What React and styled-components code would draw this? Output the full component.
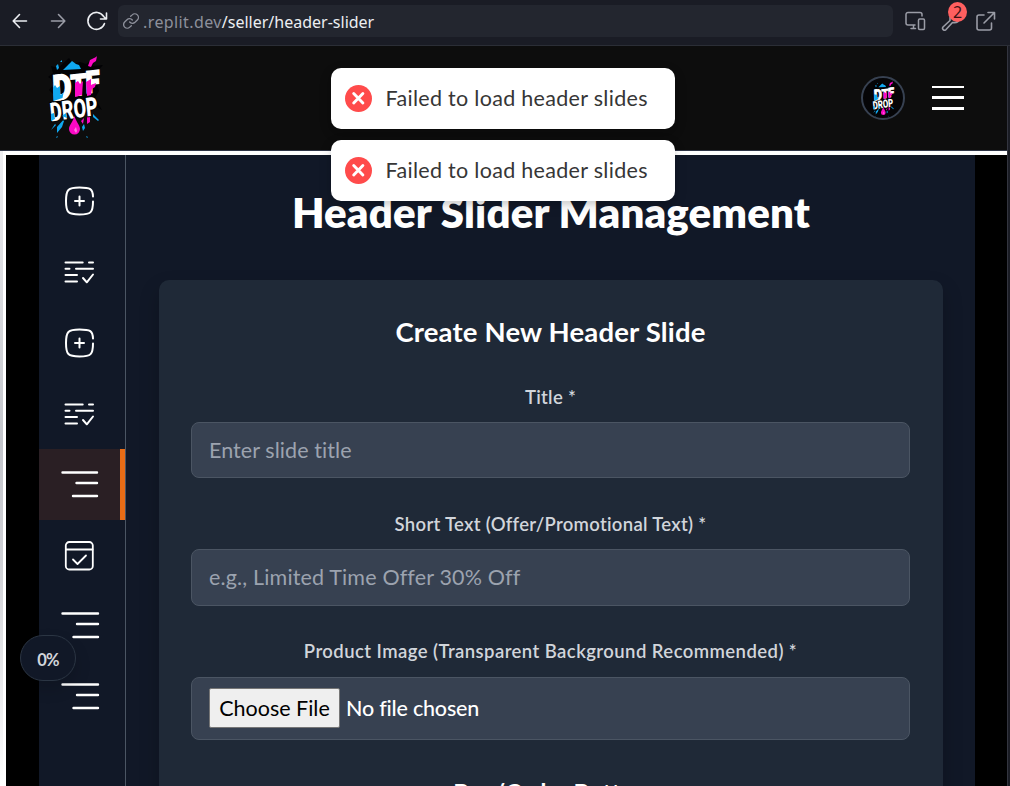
import React from "react";
import styled, { createGlobalStyle, css } from "styled-components";

const Global = createGlobalStyle`
  * { box-sizing: border-box; }
  html, body { margin: 0; padding: 0; height: 100%; overflow: hidden; background: #1c1f27; }
  body { font-family: Lato, "Open Sans", sans-serif; font-variant-ligatures: none; }
  h1, h2, h3, p { margin: 0; }
`;

const Frame = styled.div`
  position: relative;
  width: 1010px;
  height: 786px;
  overflow: hidden;
  display: flex;
  flex-direction: column;
  background: #1a1c24;
`;

const Toolbar = styled.header`
  display: flex;
  align-items: center;
  height: 46px;
  padding: 0 13px 4px 10px;
  background: #1a1c25;
  border-bottom: 1px solid #2b2e36;
  color: #9a9ca6;
  svg { display: block; flex: none; }
`;

const NavIcons = styled.div`
  display: flex;
  align-items: center;
  width: 108px;
  gap: 18px;
`;

const AddressBar = styled.div`
  flex: none;
  display: flex;
  align-items: center;
  width: 775px;
  height: 32px;
  margin-top: 1px;
  padding-left: 5px;
  border-radius: 6px;
  background: #23262f;
  font: 400 16px/20px "Noto Sans", sans-serif;
  color: #8d909b;
  white-space: pre;
`;

const Host = styled.span`
  margin-left: 4px;
  padding-top: 2px;
  letter-spacing: 0.4px;
`;

const Path = styled.span`
  padding-top: 2px;
  color: #eceef2;
`;

const Tools = styled.div`
  display: flex;
  align-items: center;
  gap: 15px;
  margin-left: 12px;
`;

const Tool = styled.div`
  position: relative;
`;

const Count = styled.span`
  position: absolute;
  left: 7px;
  top: -9px;
  width: 19px;
  height: 20px;
  border-radius: 50%;
  background: #ff5f5f;
  color: #3b1216;
  font: 400 16px/20px "Noto Sans", sans-serif;
  text-align: center;
`;

const Viewport = styled.div`
  flex: 1;
  min-height: 0;
  display: flex;
  flex-direction: column;
  width: 1008px;
  border-right: 1px solid #33353f;
`;

const SiteHeader = styled.div`
  flex: none;
  display: flex;
  align-items: center;
  height: 105px;
  padding: 0 43px 0 35px;
  background: #0d0d0d;
  border-bottom: 1px solid #2f3546;
`;

const Brand = styled.div`
  align-self: flex-start;
  svg { display: block; }
`;

const Avatar = styled.div`
  display: flex;
  align-items: center;
  justify-content: center;
  width: 44px;
  height: 44px;
  margin-left: auto;
  margin-right: 27px;
  border: 2px solid #374151;
  border-radius: 50%;
  background: #050507;
`;

const MenuButton = styled.div`
  display: flex;
  flex-direction: column;
  justify-content: space-between;
  width: 32px;
  height: 24px;
`;

const MenuBar = styled.span`
  height: ${(p) => (p.$thin ? "2px" : "3px")};
  background: #fff;
`;

const Body = styled.div`
  flex: 1;
  min-height: 0;
  display: flex;
  padding-top: 4px;
  background: #fff;
`;

const Track = styled.div`
  flex: none;
  width: 6px;
  margin-top: -4px;
  background: linear-gradient(#eeeef1, #c4c6cc 46%, #d0d1d6 65%, #fff 100%);
  border-right: 3px solid #fff;
`;

const Stage = styled.div`
  flex: 1;
  display: flex;
  padding: 0 32px 0 33px;
  background: #000;
`;

const Sidebar = styled.nav`
  flex: none;
  width: 87px;
  padding-top: 11px;
  background: #111827;
  border-right: 1px solid #4b5563;
`;

const SideItem = styled.div`
  display: flex;
  align-items: center;
  justify-content: center;
  height: 70.8px;
  width: 86px;
  padding-left: ${(p) => (p.$wide ? "1px" : 0)};
  border-right: 5px solid transparent;
  svg { display: block; overflow: visible; }
  ${(p) => p.$active && css`
    background: #2a1f24;
    border-right-color: #e76c16;
  `}
`;

const Main = styled.main`
  flex: 1;
  min-width: 0;
  padding: 32px 32px 0 33px;
  background: #111827;
  text-align: center;
`;

const PageTitle = styled.h1`
  height: 50px;
  font-size: 42px;
  line-height: 50px;
  font-weight: 800;
  letter-spacing: 0.13px;
  color: #fff;
  white-space: nowrap;
`;

const Card = styled.section`
  height: 600px;
  margin-top: 43px;
  padding: 31px 33px 0 32px;
  border-radius: 10px;
  background: #1f2937;
  box-shadow: 0 10px 20px rgba(0, 0, 0, 0.22);
`;

const CardTitle = styled.h2`
  height: 42px;
  font-size: 27.5px;
  line-height: 42px;
  font-weight: 700;
  letter-spacing: 0.16px;
  color: #fff;
  white-space: nowrap;
`;

const Label = styled.label`
  display: block;
  height: 24px;
  margin-top: ${(p) => p.$gap}px;
  font-size: 18.5px;
  line-height: 24px;
  font-weight: 600;
  letter-spacing: ${(p) => p.$spacing}px;
  color: #d1d5db;
  white-space: nowrap;
`;

const Field = styled.div`
  display: flex;
  align-items: center;
  height: ${(p) => p.$height}px;
  margin-top: ${(p) => p.$gap || 13}px;
  padding: 0 17px ${(p) => p.$lift || 0}px;
  border: 1px solid #4b5563;
  border-radius: 8px;
  background: #374151;
  color: #9ca3af;
  font-size: 21.5px;
  line-height: 28px;
  letter-spacing: ${(p) => p.$spacing || 0}px;
  white-space: nowrap;
`;

const FileButton = styled.span`
  display: flex;
  align-items: center;
  justify-content: center;
  width: 131px;
  height: 40px;
  margin-right: 6px;
  border: 1px solid #767676;
  border-radius: 2px;
  background: #efefef;
  color: #000;
`;

const FileName = styled.span`
  color: #fff;
  font-weight: 500;
  letter-spacing: -0.2px;
`;

const SectionTitle = styled.h3`
  margin-top: 37px;
  font-size: 24px;
  line-height: 32px;
  font-weight: 700;
  color: #fff;
`;

const Toasts = styled.div`
  position: absolute;
  left: 331px;
  top: 68px;
  display: flex;
  flex-direction: column;
  gap: 11px;
`;

const Toast = styled.div`
  display: flex;
  align-items: center;
  width: 344px;
  height: 61px;
  padding-left: 14px;
  border-radius: 10px;
  background: #fff;
  box-shadow: 0 4px 13px rgba(0, 0, 0, 0.13), 0 4px 4px rgba(0, 0, 0, 0.08);
  svg { display: block; margin-right: 13.5px; }
`;

const ToastText = styled.span`
  padding-bottom: 1px;
  font-size: 21.5px;
  line-height: 28px;
  letter-spacing: 0.3px;
  color: #363636;
  white-space: nowrap;
`;

const Progress = styled.div`
  position: absolute;
  left: 20px;
  top: 635px;
  width: 56px;
  height: 46px;
  border: 1px solid #2b3543;
  border-radius: 23px;
  background: #111827;
  box-shadow: 0 8px 16px rgba(0, 0, 0, 0.15);
  color: #d1d5db;
  font-size: 16.5px;
  line-height: 49px;
  font-weight: 700;
  letter-spacing: -0.8px;
  text-align: center;
`;

const Logo = ({ width, height }) => (
  <svg width={width} height={height} viewBox="0 0 80 100" fontFamily="Roboto, sans-serif" fontWeight="900">
    <path d="M16 33 13 31l5-4-2-7 7 2 11-10 4 6 7-2 6 2 9-7-2 9 10-1-6 7 3 3-4 3 3 13-4 7 7 12-13-7-6 13-9 4-9-7-11 6 4-9-6-6 2-9-5-5 4-5z" fill="#020204" />
    <g fill="#10a8f0">
      <path d="m28 24 6-6 3-3 4 3 3 1 2 4zM21 20l2-2 1 4-2 2zM25 16l2-2v2zM22 81l8-9-3 9-5 6zM16 84l4-6 1 1zM58 68l6 6-1 1-5-4zM47 81l2-3 1 4-2 3zM51 90l2 1-1 1zM21 91l2-1-1 2z" />
    </g>
    <g fill="#fb08c5">
      <path d="m53 20 2-6 6-3 1-1-1 5-3 2-2 4zM52 66h3v10l-3 2zM46 75l3-3-1 6z" />
    </g>
    <g fill="#fff" stroke="#fff" strokeWidth="1.600">
      <text transform="translate(18 54.500) rotate(-6) skewX(-4)" fontSize="35" textLength="19" lengthAdjust="spacingAndGlyphs">D</text>
      <text transform="translate(36 50) rotate(-6) skewX(-4)" fontSize="29" textLength="16" lengthAdjust="spacingAndGlyphs">T</text>
      <text transform="translate(51 47) rotate(-6) skewX(-4)" fontSize="30" textLength="14" lengthAdjust="spacingAndGlyphs">F</text>
    </g>
    <path d="m18 42 2-3 2 3 3-2 .5 9 3-2-1 5-9 3z" fill="#10a8f0" />
    <path d="m40 37 3-2 2 3 3-3-1 14-7 2zM51 36l5-3v6l5-2-1 4-3 2-1 6-4 1z" fill="#fb08c5" />
    <text transform="translate(16 75.500) rotate(-8) skewX(-2)" fontSize="26" textLength="48" lengthAdjust="spacingAndGlyphs" fill="#fff" stroke="#020204" strokeWidth="2" paintOrder="stroke">DROP</text>
    <path d="m16 68 3-1 1 6-4 2zM27 70l4-3 1 5z" fill="#10a8f0" />
    <path d="M39.500 70c-1 5-5.500 9-5.500 13a5.500 5.500 0 0 0 11 0c0-4-4.500-8-5.500-13z" fill="#fb08c5" />
    <path d="m39 84 2-3 1 4-1 2z" fill="#ff78df" />
  </svg>
);

const ToastIcon = () => (
  <svg width="27" height="27" viewBox="0 0 27 27">
    <circle cx="13.500" cy="13.500" r="13.500" fill="#ff4b4b" />
    <path d="m8.700 8.500 9.200 9.500m0-9.500-9.200 9.500" stroke="#fff" strokeWidth="2.900" strokeLinecap="round" />
  </svg>
);

const stroke = { fill: "none", stroke: "#fff", strokeWidth: 2, strokeLinecap: "round", strokeLinejoin: "round" };

const AddIcon = () => (
  <svg width="31" height="30" viewBox="0 0 31 30" {...stroke}>
    <path d="M29 10.500C28.700 3 26.500 1.500 15.500 1.500 4 1.500 2 3.500 2 15s2 13.500 13.500 13.500S29 26.500 29 15.500M15.500 10.500v9M11 15h9" />
  </svg>
);

const ListIcon = () => (
  <svg width="32" height="24" viewBox="0 0 32 24" {...stroke}>
    <path d="M1.500 2.500h17.200M25 2.500h4M1.500 8.800h4M12 8.800h17M1.500 15h11.500M1.500 21.500h11.500M19 18l3.800 4.300L29 14.500" />
  </svg>
);

const LinesIcon = ({ wide }) => (
  <svg width={wide ? 38 : 37} height="28" viewBox={`0 0 ${wide ? 38 : 37} 28`} {...stroke} strokeWidth="2.400">
    <path d={wide ? "M1.500 1.500H37M16 12H37M12.500 25H37" : "M1.500 1.500H36M15.500 12H36M12 25H36"} />
  </svg>
);

const CalendarIcon = () => (
  <svg width="31" height="29" viewBox="0 0 31 29" {...stroke} strokeWidth="1.800">
    <rect x="1.800" y="1" width="27" height="27.500" rx="3.500" />
    <path d="M2 8.500h26.500M9 18.500l4.500 4.500 8.500-8.500" />
  </svg>
);

const sideItems = [AddIcon, ListIcon, AddIcon, ListIcon, LinesIcon, CalendarIcon, LinesIcon, LinesIcon];

const thin = { fill: "none", stroke: "currentColor", strokeWidth: 1.6, strokeLinecap: "round", strokeLinejoin: "round" };

export default function App() {
  return (
    <Frame>
      <Global />
      <Toolbar>
        <NavIcons>
          <svg width="20" height="20" viewBox="0 0 20 20" {...thin} stroke="#eceef2">
            <path d="M16.500 10H3.500M9.500 3.500 3.200 10l6.300 6.500" />
          </svg>
          <svg width="20" height="20" viewBox="0 0 20 20" {...thin}>
            <path d="M3.500 10h13M10.500 3.500l6.300 6.500-6.300 6.500" />
          </svg>
          <svg width="22" height="22" viewBox="0 0 22 22" {...thin} stroke="#eceef2">
            <path d="M18.500 13.500a8.500 8.500 0 1 1-.8-7l2.300 2.500M20.500 3v6h-6" />
          </svg>
        </NavIcons>
        <AddressBar>
          <svg width="16" height="16" viewBox="0 0 24 24" {...thin} strokeWidth="2">
            <path d="M10 13.500a5.500 5.500 0 0 0 8 .5l3.500-3.500a5.400 5.400 0 0 0-7.700-7.700L11.500 5M14 10.500a5.500 5.500 0 0 0-8-.5l-3.500 3.500a5.400 5.400 0 0 0 7.700 7.700l2.300-2.200" />
          </svg>
          <Host>.replit.dev</Host>
          <Path>/seller/header-slider</Path>
        </AddressBar>
        <Tools>
          <Tool>
            <svg width="21" height="20" viewBox="0 0 21 20" {...thin} strokeWidth="1.500">
              <path d="M10 14H3a2 2 0 0 1-2-2V3.500a2 2 0 0 1 2-2h12a2 2 0 0 1 2 2V5M6 17.500h4.500M8.500 14v3.500" />
              <rect x="13.500" y="8" width="6" height="10.500" rx="1.200" />
            </svg>
          </Tool>
          <Tool>
            <svg width="20" height="20" viewBox="0 0 20 20" {...thin}>
              <path d="M9 6.500v3l-7 6.500a2 2 0 0 0 2.800 2.800l6.700-7.300c3 .5 6-.5 6.500-3.500" />
            </svg>
            <Count>2</Count>
          </Tool>
          <Tool>
            <svg width="20" height="20" viewBox="0 0 20 20" {...thin}>
              <path d="M8 4H3a2 2 0 0 0-2 2v11a2 2 0 0 0 2 2h10.500a2 2 0 0 0 2-2v-5M8 12 18.500 1.500M12 1.500h6.500V8" />
            </svg>
          </Tool>
        </Tools>
      </Toolbar>
      <Viewport>
        <SiteHeader>
          <Brand><Logo width={80} height={100} /></Brand>
          <Avatar><Logo width={35} height={43} /></Avatar>
          <MenuButton><MenuBar $thin /><MenuBar /><MenuBar /></MenuButton>
        </SiteHeader>
        <Body>
          <Track />
          <Stage>
            <Sidebar>
              {sideItems.map((Icon, i) => (
                <SideItem key={i} $active={i === 4} $wide={i > 5}><Icon wide={i > 4} /></SideItem>
              ))}
            </Sidebar>
            <Main>
              <PageTitle>Header Slider Management</PageTitle>
              <Card>
                <CardTitle>Create New Header Slide</CardTitle>
                <Label $gap={32} $spacing={0.3}>Title *</Label>
                <Field $height={56} $spacing={0.08}>Enter slide title</Field>
                <Label $gap={34} $spacing={0.3}>Short Text (Offer/Promotional Text) *</Label>
                <Field $height={57} $spacing={0.16} $lift={1}>e.g., Limited Time Offer 30% Off</Field>
                <Label $gap={33} $spacing={0.43}>Product Image (Transparent Background Recommended) *</Label>
                <Field $height={63} $gap={14} $lift={2}>
                  <FileButton>Choose File</FileButton>
                  <FileName>No file chosen</FileName>
                </Field>
                <SectionTitle>Buy/Order Button</SectionTitle>
              </Card>
            </Main>
          </Stage>
        </Body>
      </Viewport>
      <Toasts>
        <Toast><ToastIcon /><ToastText>Failed to load header slides</ToastText></Toast>
        <Toast><ToastIcon /><ToastText>Failed to load header slides</ToastText></Toast>
      </Toasts>
      <Progress>0%</Progress>
    </Frame>
  );
}
